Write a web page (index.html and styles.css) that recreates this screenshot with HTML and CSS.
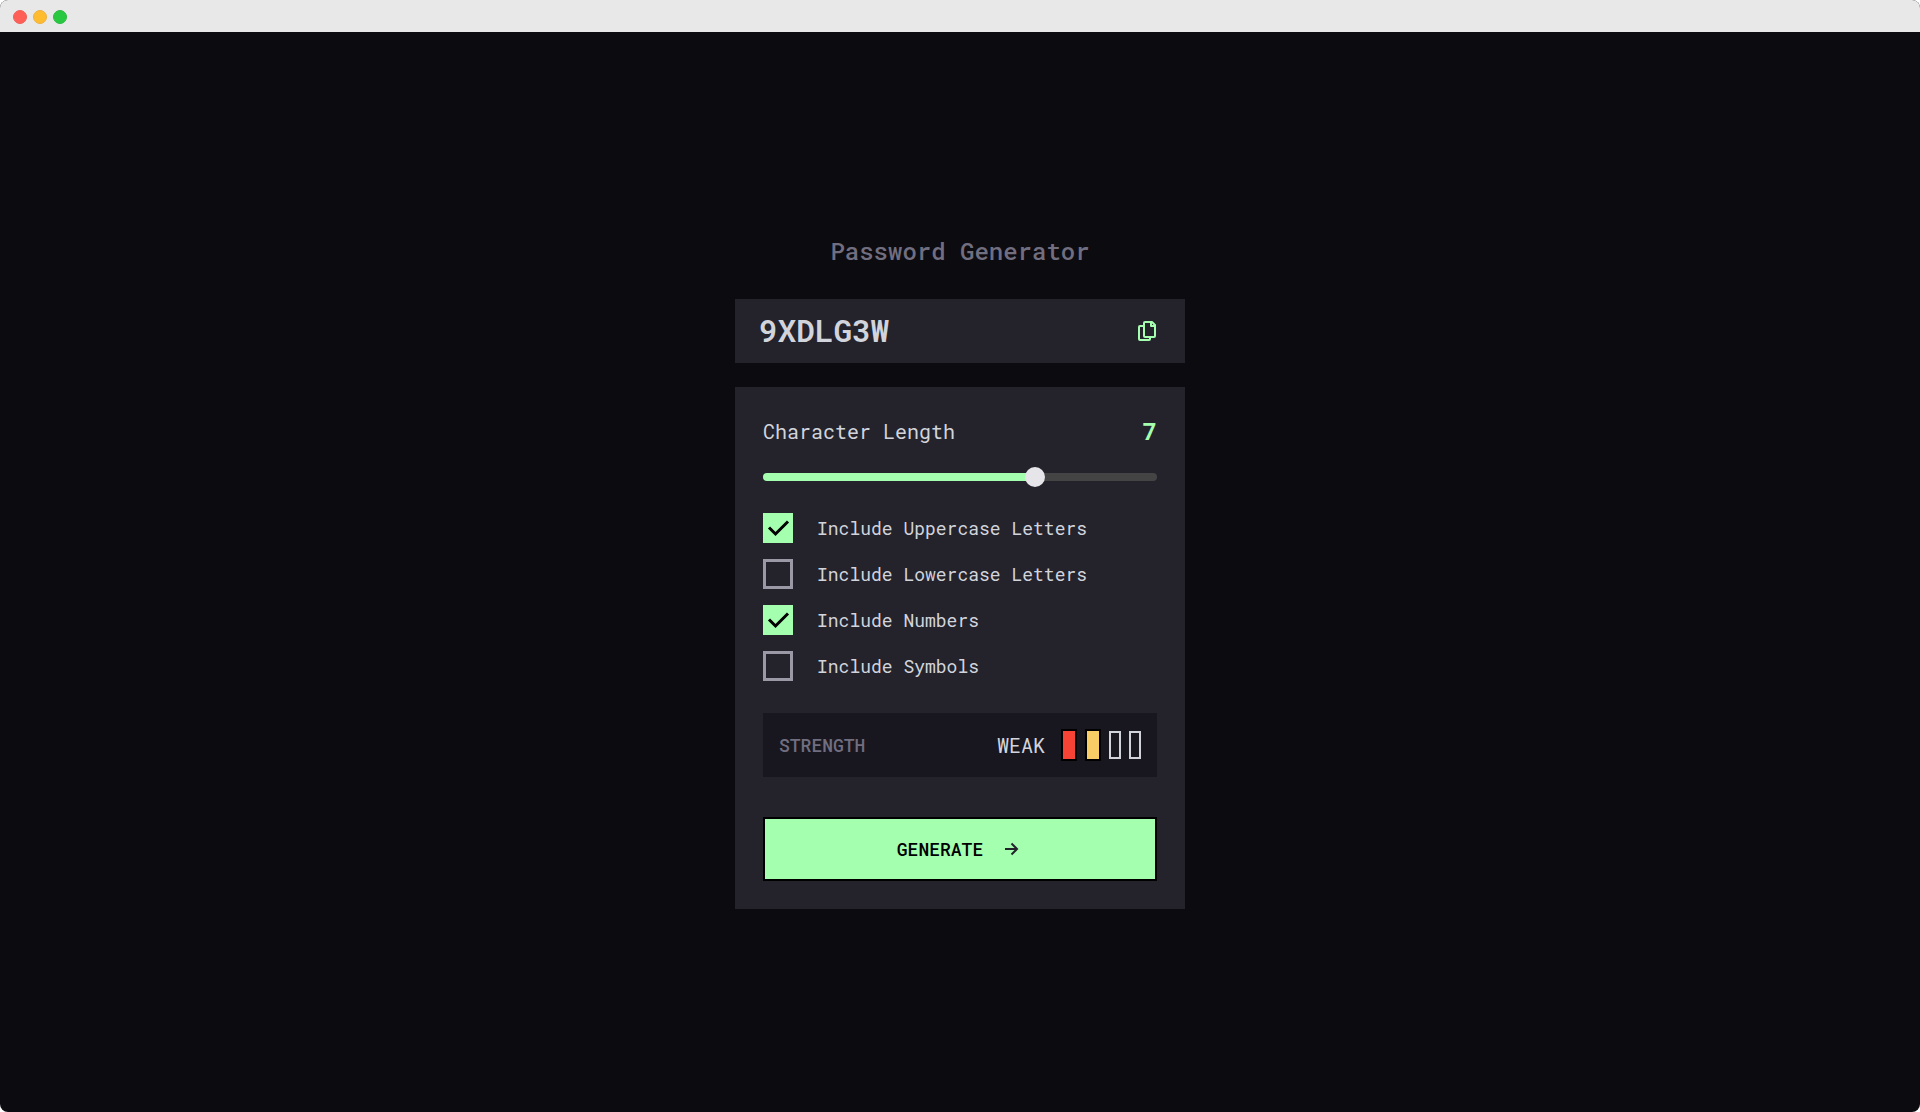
FILE: index.html
```html
<!DOCTYPE html>
<html lang="en">
<head>
<meta charset="utf-8">
<meta name="viewport" content="width=device-width, initial-scale=1">
<title>Password Generator</title>
<link rel="stylesheet" href="styles.css">
</head>
<body>
<div class="window">
  <div class="titlebar">
    <span class="light light-close"></span>
    <span class="light light-minimise"></span>
    <span class="light light-zoom"></span>
  </div>
  <main class="stage">
    <div class="generator">
      <h1 class="title">Password Generator</h1>
      <section class="result">
        <output class="password">9XDLG3W</output>
        <button class="copy" type="button" aria-label="Copy password">
          <svg width="20" height="20" viewBox="-1 0 20 20" fill="none" stroke="currentColor" stroke-width="2" stroke-linejoin="round" aria-hidden="true">
            <path d="M6 5H2Q1 5 1 6v12q0 1 1 1h9q1 0 1-1v-2"/>
            <path d="M7 1h7l3 3v11q0 1-1 1H7q-1 0-1-1V2Q6 1 7 1z"/>
            <path d="M13 1v4h4"/>
          </svg>
        </button>
      </section>
      <form class="settings">
        <div class="length-row">
          <label class="length-label" for="length">Character Length</label>
          <output class="length-value" for="length">7</output>
        </div>
        <input class="slider" id="length" type="range" min="0" max="10" value="7">
        <div class="options">
          <label class="option">
            <span class="tick"><input class="box" type="checkbox" checked><svg class="mark" viewBox="0 0 30 30" aria-hidden="true"><path d="M6 14.500l6.500 6.500L25 8.500"/></svg></span>
            Include Uppercase Letters
          </label>
          <label class="option">
            <span class="tick"><input class="box" type="checkbox"><svg class="mark" viewBox="0 0 30 30" aria-hidden="true"><path d="M6 14.500l6.500 6.500L25 8.500"/></svg></span>
            Include Lowercase Letters
          </label>
          <label class="option">
            <span class="tick"><input class="box" type="checkbox" checked><svg class="mark" viewBox="0 0 30 30" aria-hidden="true"><path d="M6 14.500l6.500 6.500L25 8.500"/></svg></span>
            Include Numbers
          </label>
          <label class="option">
            <span class="tick"><input class="box" type="checkbox"><svg class="mark" viewBox="0 0 30 30" aria-hidden="true"><path d="M6 14.500l6.500 6.500L25 8.500"/></svg></span>
            Include Symbols
          </label>
        </div>
        <div class="strength">
          <span class="strength-label">STRENGTH</span>
          <span class="strength-value">WEAK</span>
          <span class="bars">
            <span class="bar bar-on bar-red"></span>
            <span class="bar bar-on bar-yellow"></span>
            <span class="bar"></span>
            <span class="bar"></span>
          </span>
        </div>
        <button class="generate" type="button">
          GENERATE
          <svg width="20" height="20" viewBox="0 0 20 20" fill="none" stroke="#24232c" stroke-width="2" aria-hidden="true"><path d="M2 10h12M8.500 4.500L14 10l-5.500 5.500"/></svg>
        </button>
      </form>
    </div>
  </main>
</div>
</body>
</html>
```
FILE: styles.css
```css
* {
  box-sizing: border-box;
}

body {
  margin: 0;
  background: #fff;
  color: #d2d4dc;
  font-family: "Roboto Mono", "DejaVu Sans Mono", monospace;
}

button {
  font: inherit;
  cursor: pointer;
}

.window {
  display: flex;
  flex-direction: column;
  min-height: 100vh;
  border-radius: 8px;
  overflow: hidden;
  background: #0c0b10;
}

.titlebar {
  display: flex;
  align-items: center;
  gap: 6px;
  height: 32px;
  padding: 2px 13px 0;
  background: #e8e8e8;
}

.light {
  width: 14px;
  height: 14px;
  border: 1px solid;
  border-radius: 50%;
}

.light-close {
  background: #ff5f57;
  border-color: #ee5f58;
}

.light-minimise {
  background: #febc2e;
  border-color: #eeb040;
}

.light-zoom {
  background: #28c840;
  border-color: #2bba40;
}

.stage {
  display: flex;
  flex: 1;
  align-items: center;
  justify-content: center;
}

.generator {
  width: 450px;
  max-width: 100%;
}

.title {
  margin: 0 0 32px;
  color: #716e80;
  font-size: 24px;
  font-weight: 500;
  line-height: 32px;
  text-align: center;
}

.result {
  display: flex;
  align-items: center;
  justify-content: space-between;
  min-height: 64px;
  margin-bottom: 24px;
  padding: 0 28px 0 24px;
  background: #24232c;
}

.password {
  padding-bottom: 2px;
  font-size: 31px;
  font-weight: 600;
  line-height: 40px;
}

.copy {
  display: flex;
  padding: 0;
  border: 0;
  background: none;
  color: #a4ffaf;
}

.settings {
  padding: 28px;
  background: #24232c;
}

.length-row {
  display: flex;
  align-items: center;
  justify-content: space-between;
  line-height: 32px;
}

.length-label {
  font-size: 20px;
}

.length-value {
  color: #a4ffaf;
  font-size: 24px;
  font-weight: 700;
}

.slider {
  display: block;
  width: 100%;
  height: 20px;
  margin: 20px 0 26px;
  appearance: none;
  background: none;
}

.slider::-webkit-slider-runnable-track {
  height: 8px;
  border-radius: 4px;
  background: linear-gradient(to right, #a4ffaf 70%, #444 70%);
}

.slider::-webkit-slider-thumb {
  width: 20px;
  height: 20px;
  margin-top: -6px;
  border-radius: 50%;
  appearance: none;
  background: #e6e5ea;
}

.options {
  display: grid;
  gap: 16px;
}

.option {
  display: flex;
  align-items: center;
  gap: 24px;
  font-size: 18px;
  line-height: 30px;
}

.tick {
  display: grid;
  width: 30px;
  height: 30px;
}

.box,
.mark {
  grid-area: 1 / 1;
  width: 30px;
  height: 30px;
  margin: 0;
}

.box {
  appearance: none;
  border: 3px solid #9c99a7;
}

.box:checked {
  border-color: #a4ffaf;
  background: #a4ffaf;
}

.mark {
  visibility: hidden;
  pointer-events: none;
  fill: none;
  stroke: #000;
  stroke-width: 3;
}

.box:checked + .mark {
  visibility: visible;
}

.strength {
  display: flex;
  align-items: center;
  min-height: 64px;
  margin: 32px 0 40px;
  padding: 0 16px;
  background: #18171f;
}

.strength-label {
  margin-right: auto;
  color: #716e80;
  font-size: 18px;
  font-weight: 500;
}

.strength-value {
  margin-right: 16px;
  font-size: 20px;
}

.bars {
  display: flex;
  align-items: center;
  gap: 8px;
}

.bar {
  width: 12px;
  height: 28px;
  border: 2px solid #d2d4dc;
}

.bar-on {
  width: 16px;
  height: 32px;
  border-color: #000;
}

.bar-red {
  background: #f64336;
}

.bar-yellow {
  background: #f8cd65;
}

.generate {
  display: flex;
  align-items: center;
  justify-content: center;
  gap: 20px;
  width: 100%;
  min-height: 64px;
  border: 2px solid #000;
  background: #a4ffaf;
  color: #000;
  font-size: 18px;
  font-weight: 500;
}
```
